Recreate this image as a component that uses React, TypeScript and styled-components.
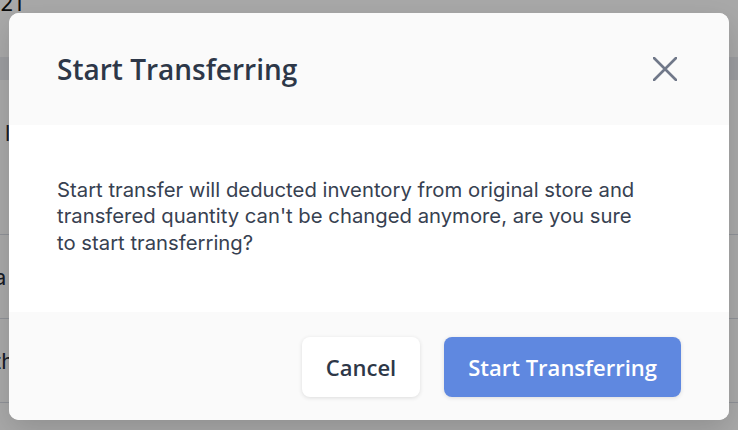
import React from 'react'
import styled, { createGlobalStyle } from 'styled-components'

const GlobalStyle = createGlobalStyle`
  html, body {
    margin: 0;
    padding: 0;
    width: 738px;
    height: 430px;
    overflow: hidden;
    background: #ffffff;
  }
  * {
    box-sizing: border-box;
  }
`

const Page = styled.div`
  width: 738px;
  height: 430px;
  background: #ffffff;
  font-family: 'Inter', 'Liberation Sans', sans-serif;
  color: #1f2937;
  display: flex;
  flex-direction: column;
`

const PageTop = styled.div`
  height: 65px;
  font-size: 22px;
  line-height: 1;
  margin-top: -8px;
  color: #111111;
`

const TableHead = styled.div`
  height: 23px;
  background: #eceef2;
`

const TableRow = styled.div<{ h: number; top?: number; indent?: number }>`
  height: ${props => props.h}px;
  border-bottom: 1px solid #d9dde6;
  display: flex;
  align-items: ${props => (props.top ? 'flex-start' : 'center')};
  padding-top: ${props => props.top || 0}px;
  padding-left: ${props => props.indent || 0}px;
  font-size: 22px;
  color: #1f2937;
  margin-left: -6px;
`

const Overlay = styled.div`
  position: fixed;
  inset: 0;
  background: rgba(0, 0, 0, 0.34);
  display: flex;
  justify-content: center;
  align-items: flex-start;
  padding-top: 13px;
`

const Modal = styled.div`
  width: 720px;
  height: 407px;
  border-radius: 10px;
  overflow: hidden;
  background: #ffffff;
  display: flex;
  flex-direction: column;
  box-shadow: 0 10px 30px rgba(0, 0, 0, 0.15);
`

const ModalHeader = styled.div`
  height: 112px;
  flex-shrink: 0;
  background: #fafafa;
  display: flex;
  align-items: center;
  justify-content: space-between;
  padding: 0 50px 0 48px;
`

const Title = styled.h2`
  margin: 0;
  font-family: 'Open Sans', 'Liberation Sans', sans-serif;
  font-weight: 600;
  font-size: 28px;
  color: #2d3748;
`

const CloseButton = styled.button`
  border: 0;
  background: transparent;
  padding: 2px;
  width: 28px;
  height: 28px;
  display: flex;
  align-items: center;
  justify-content: center;
  cursor: pointer;
  color: #707889;
`

const ModalBody = styled.div`
  flex: 1;
  background: #ffffff;
  display: flex;
  align-items: center;
  padding: 0 48px 4px;
`

const Message = styled.p`
  margin: 0;
  max-width: 595px;
  font-family: 'Inter', 'Liberation Sans', sans-serif;
  font-size: 20.3px;
  line-height: 26.5px;
  color: #374151;
`

const ModalFooter = styled.div`
  height: 108px;
  flex-shrink: 0;
  background: #fafafa;
  display: flex;
  align-items: center;
  justify-content: flex-end;
  gap: 24px;
  padding: 2px 48px 0;
`

const Button = styled.button<{ primary?: boolean }>`
  height: 60px;
  padding: 0 24px;
  border: 0;
  border-radius: 8px;
  font-family: 'Open Sans', 'Liberation Sans', sans-serif;
  font-weight: 600;
  font-size: 22px;
  cursor: pointer;
  background: ${props => (props.primary ? '#5f88e0' : '#ffffff')};
  color: ${props => (props.primary ? '#ffffff' : '#2d3748')};
  box-shadow: 0 1px 4px rgba(0, 0, 0, 0.12);
`

const IconClose = () => (
  <svg width="24" height="24" viewBox="0 0 24 24" fill="none">
    <path d="M1 1L23 23M23 1L1 23" stroke="currentColor" strokeWidth="2.6" strokeLinecap="round" />
  </svg>
)

export default function App() {
  return (
    <>
      <GlobalStyle />
      <Page>
        <PageTop>21</PageTop>
        <TableHead />
        <TableRow h={155} top={40} indent={11}>
          l
        </TableRow>
        <TableRow h={84}>a</TableRow>
        <TableRow h={84}>th</TableRow>
      </Page>
      <Overlay>
        <Modal>
          <ModalHeader>
            <Title>Start Transferring</Title>
            <CloseButton aria-label="Close">
              <IconClose />
            </CloseButton>
          </ModalHeader>
          <ModalBody>
            <Message>
              Start transfer will deducted inventory from original store and transfered quantity can't be changed
              anymore, are you sure to start transferring?
            </Message>
          </ModalBody>
          <ModalFooter>
            <Button>Cancel</Button>
            <Button primary>Start Transferring</Button>
          </ModalFooter>
        </Modal>
      </Overlay>
    </>
  )
}
